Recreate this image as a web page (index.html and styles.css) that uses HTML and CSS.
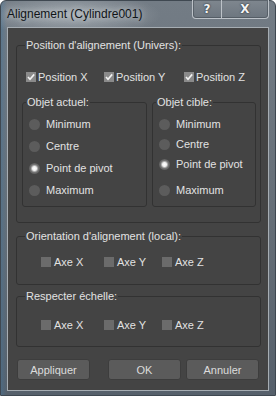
FILE: index.html
```html
<html>
    <head>
        <meta charset="UTF-8">
        <title>Alignement (Cylindre001)</title>
        <link rel="stylesheet" href="styles.css">
    </head>
    <body>
        <div class="window">
            <div class="titlebar">
                <span class="title">Alignement (Cylindre001)</span>
                <div class="caption-btns">
                    <span class="cap-btn help">?</span>
                    <span class="cap-btn close">X</span>
                </div>
            </div>

            <div class="client">
                <fieldset class="group g-pos">
                    <legend>Position d'alignement (Univers):</legend>
                    <div class="check-row pos-row">
                        <label class="check"><span class="box on"><svg width="10" height="10" viewBox="0 0 10 10"><polyline points="2,5 4,7.2 8.2,2.4" /></svg></span>Position X</label>
                        <label class="check"><span class="box on"><svg width="10" height="10" viewBox="0 0 10 10"><polyline points="2,5 4,7.2 8.2,2.4" /></svg></span>Position Y</label>
                        <label class="check"><span class="box on"><svg width="10" height="10" viewBox="0 0 10 10"><polyline points="2,5 4,7.2 8.2,2.4" /></svg></span>Position Z</label>
                    </div>
                    <div class="sub-groups">
                        <fieldset class="group sub sub-left">
                            <legend>Objet actuel:</legend>
                            <div class="radio-list">
                                <label class="radio-item"><span class="radio"></span>Minimum</label>
                                <label class="radio-item"><span class="radio"></span>Centre</label>
                                <label class="radio-item"><span class="radio on"></span>Point de pivot</label>
                                <label class="radio-item"><span class="radio"></span>Maximum</label>
                            </div>
                        </fieldset>
                        <fieldset class="group sub sub-right">
                            <legend>Objet cible:</legend>
                            <div class="radio-list">
                                <label class="radio-item"><span class="radio"></span>Minimum</label>
                                <label class="radio-item"><span class="radio"></span>Centre</label>
                                <label class="radio-item"><span class="radio on"></span>Point de pivot</label>
                                <label class="radio-item last"><span class="radio"></span>Maximum</label>
                            </div>
                        </fieldset>
                    </div>
                </fieldset>

                <fieldset class="group g-orient">
                    <legend>Orientation d'alignement (local):</legend>
                    <div class="check-row axe-row">
                        <label class="check"><span class="box"></span>Axe X</label>
                        <label class="check"><span class="box"></span>Axe Y</label>
                        <label class="check"><span class="box"></span>Axe Z</label>
                    </div>
                </fieldset>

                <fieldset class="group g-scale">
                    <legend>Respecter échelle:</legend>
                    <div class="check-row axe-row">
                        <label class="check"><span class="box"></span>Axe X</label>
                        <label class="check"><span class="box"></span>Axe Y</label>
                        <label class="check"><span class="box"></span>Axe Z</label>
                    </div>
                </fieldset>

                <div class="buttons">
                    <button class="btn">Appliquer</button>
                    <button class="btn ok">OK</button>
                    <button class="btn cancel">Annuler</button>
                </div>
            </div>
        </div>
    </body>
</html>
```

FILE: styles.css
```css
/* dark max-style dialog inside an aero frame */
html, body {
  margin: 0;
  padding: 0;
}
body {
  width: 276px;
  height: 396px;
  overflow: hidden;
  font-family: 'Liberation Sans', Arial, sans-serif;
  font-size: 11px;
  color: #e2e2e2;
}

.window {
  box-sizing: border-box;
  width: 276px;
  height: 396px;
  border: 1px solid #3f4851;
  border-radius: 6px 6px 0 0;
  background:
    radial-gradient(ellipse 90px 22px at 70px 14px, rgba(205,210,214,0.55), rgba(205,210,214,0) 100%),
    linear-gradient(90deg, rgba(70,115,150,0.5) 0px, rgba(70,115,150,0) 6px),
    linear-gradient(#737c85, #646d76 60%, #56606b);
}

.titlebar {
  height: 26px;
  display: flex;
  justify-content: space-between;
  align-items: flex-start;
  padding: 0 6px 0 6px;
}
.title {
  font-size: 12px;
  line-height: 14px;
  margin-top: 6px;
  color: #101418;
  text-shadow: 0 0 6px rgba(235,238,240,0.9);
}

.caption-btns {
  display: flex;
  margin-top: -1px;
  height: 18px;
  border: 1px solid #bcc2c8;
  border-top: none;
  border-radius: 0 0 4px 4px;
  background: linear-gradient(#7f878f, #6d767f);
  box-shadow: inset 0 0 0 1px rgba(60,68,76,0.5);
}
.cap-btn {
  display: block;
  text-align: center;
  font-family: 'DejaVu Sans', sans-serif;
  font-weight: bold;
  font-size: 12px;
  line-height: 18px;
  color: #f4f4f4;
  text-shadow: 0 0 2px #2a3038, 0 0 1px #2a3038;
}
.help {
  width: 28px;
  border-right: 1px solid #bcc2c8;
}
.close {
  width: 46px;
}

.client {
  box-sizing: border-box;
  height: 364px;
  margin: 0 6px;
  border: 1px solid #a6adb3;
  background: #444444;
  padding: 0 7px 0 8px;
  overflow: hidden;
}

.group {
  margin: 0;
  border: 1px solid #323232;
  border-radius: 3px;
  min-width: 0;
}
.group legend {
  padding: 0 1px;
  margin-left: 3px;
  line-height: 14px;
}

.g-pos {
  margin-top: 10px;
  padding: 18px 4px 15px 5px;
}
.g-orient {
  margin-top: 6px;
  padding: 12px 4px 15px 5px;
}
.g-scale {
  margin-top: 4px;
  padding: 15px 4px 14px 5px;
}

.check-row {
  display: grid;
  line-height: 14px;
}
.pos-row {
  grid-template-columns: 78px 80px auto;
  margin-left: 4px;
}
.axe-row {
  grid-template-columns: 63px 58px auto;
  margin-left: 19px;
}
.check {
  display: flex;
  align-items: center;
  white-space: nowrap;
}
.box {
  width: 10px;
  height: 10px;
  background: #6b6b6b;
  margin-right: 3px;
  flex: none;
}
.box.on {
  background: #8a8a8a;
}
.box svg {
  display: block;
}
.box polyline {
  fill: none;
  stroke: #f2f2f2;
  stroke-width: 1.6;
}
.pos-row .box {
  margin-right: 2px;
}

.sub-groups {
  display: flex;
  margin-top: 11px;
}
.sub {
  padding: 7px 0 8px 0;
}
.sub-left {
  width: 125px;
  box-sizing: border-box;
}
.sub-right {
  width: 104px;
  box-sizing: border-box;
  margin-left: 5px;
}

.radio-list {
  display: flex;
  flex-direction: column;
}
.radio-item {
  display: flex;
  align-items: center;
  height: 16px;
  white-space: nowrap;
}
.sub-left .radio-item + .radio-item {
  margin-top: 6px;
}
.sub-right .radio-item + .radio-item {
  margin-top: 4px;
}
.sub-right .radio-item.last {
  margin-top: 10px;
}
.radio {
  width: 11px;
  height: 11px;
  border-radius: 50%;
  background: #5c5c5c;
  margin: 0 6px 0 6px;
  flex: none;
}
.radio.on {
  background: radial-gradient(circle, #ffffff 0px, #f0f0f0 2px, #b0b0b0 3px, #747474 4px, #5c5c5c 5.5px);
}

.buttons {
  display: flex;
  margin: 12px 0 0 1px;
}
.btn {
  box-sizing: border-box;
  width: 73px;
  height: 21px;
  padding: 0;
  border: 1px solid #3d3d3d;
  border-radius: 3px;
  background: #5b5b5b;
  color: #dcdcdc;
  font-family: 'Liberation Sans', Arial, sans-serif;
  font-size: 11px;
  text-align: center;
  cursor: pointer;
}
.ok {
  margin-left: 18px;
}
.cancel {
  margin-left: 5px;
}
```
